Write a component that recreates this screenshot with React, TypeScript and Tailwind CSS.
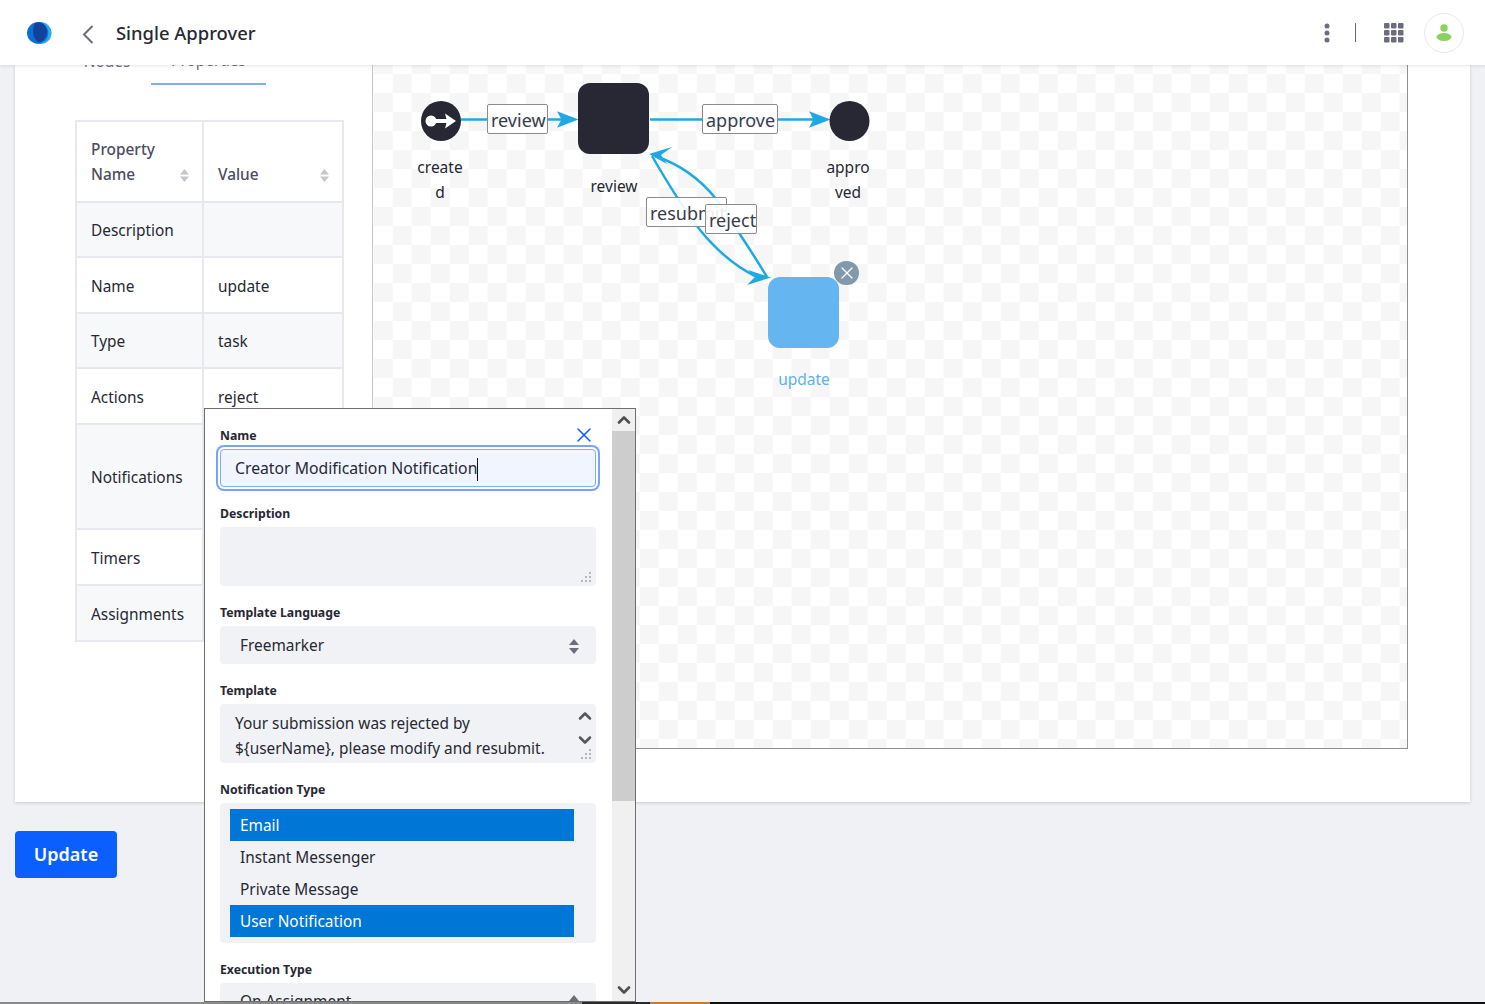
import { ChevronDown, ChevronUp, X } from "lucide-react";

const rows = [
  { name: "Description", value: "", h: "h-[55px]" },
  { name: "Name", value: "update", h: "h-[56px]" },
  { name: "Type", value: "task", h: "h-[55px]" },
  { name: "Actions", value: "reject", h: "h-[56px]" },
  { name: "Notifications", value: "", h: "h-[105px]" },
  { name: "Timers", value: "", h: "h-[56px]" },
  { name: "Assignments", value: "", h: "h-[56px]" },
];

const notificationTypes = [
  { label: "Email", selected: true },
  { label: "Instant Messenger", selected: false },
  { label: "Private Message", selected: false },
  { label: "User Notification", selected: true },
];

function SortIcon() {
  return (
    <svg width="9" height="13" viewBox="0 0 9 13" className="shrink-0 fill-[#c5c6cd]">
      <path d="M4.5 0 9 5.5H0z" />
      <path d="M4.5 13 0 7.5h9z" />
    </svg>
  );
}

function SelectArrows() {
  return (
    <svg width="10" height="15" viewBox="0 0 10 15" className="fill-[#6b6c7e]">
      <path d="M5 0l5 6H0z" />
      <path d="M5 15 0 9h10z" />
    </svg>
  );
}

function ResizeGrip() {
  return (
    <svg width="11" height="11" viewBox="0 0 11 11" className="absolute bottom-[3px] right-[4px] fill-[#b5b6c0]">
      <rect x="8" y="0" width="2" height="2" />
      <rect x="4" y="4" width="2" height="2" />
      <rect x="8" y="4" width="2" height="2" />
      <rect x="0" y="8" width="2" height="2" />
      <rect x="4" y="8" width="2" height="2" />
      <rect x="8" y="8" width="2" height="2" />
    </svg>
  );
}

function FieldLabel({ children }: { children: string }) {
  return <div className="mb-[5px] h-[18px] text-[12.25px] leading-[19px] font-bold text-[#272833]">{children}</div>;
}

function EdgeLabel({ text, className }: { text: string; className: string }) {
  return (
    <div
      className={`absolute h-[30px] overflow-hidden whitespace-nowrap rounded-[2px] border border-[#8b8b8b] bg-white/90 px-[3px] text-[18px] leading-[30px] text-[#3b3c48] ${className}`}
    >
      {text}
    </div>
  );
}

function Graph() {
  return (
    <>
      <svg width="1035" height="684" viewBox="373 65 1035 684" className="absolute left-0 top-0">
        <g fill="none" stroke="#1fa9e2" strokeWidth="2.5">
          <path d="M461 119.5H562" />
          <path d="M650 119.5H814" />
          <path d="M652 156C667 182 683 208 700 230C718 252 738 268 757 277" />
          <path d="M767 277C752 252 736 228 717 200C698 176 676 163 655 156" />
        </g>
        <g fill="#1fa9e2">
          <path d="M557 111.300 578.500 119.500 557 127.700 561.500 119.500z" />
          <path d="M809 111.300 830.500 119.500 809 127.700 813.500 119.500z" />
          <path d="M649 154 672 147 661 155 667 164z" />
          <path d="M771 277.500 748 270 755 277 747 285z" />
        </g>
        <circle cx="441" cy="121" r="20" fill="#272833" />
        <g fill="#fff">
          <circle cx="431" cy="121" r="5.500" />
          <rect x="431" y="119" width="18" height="4" />
          <path d="M445 113.500 456 121 445 128.500 447 121z" />
        </g>
        <rect x="578" y="83" width="71" height="71" rx="12" fill="#272833" />
        <circle cx="849.500" cy="121" r="20" fill="#272833" />
        <rect x="768" y="277" width="71" height="71" rx="12" fill="#64b5f0" />
      </svg>
      <EdgeLabel text="review" className="left-[114px] top-[39px] w-[61px]" />
      <EdgeLabel text="approve" className="left-[329px] top-[39px] w-[76px]" />
      <EdgeLabel text="resubmit" className="left-[273px] top-[132px] w-[81px]" />
      <EdgeLabel text="reject" className="left-[332px] top-[139px] w-[52px]" />
      <div className="absolute left-[461px] top-[196px] flex h-[24px] w-[25px] items-center justify-center rounded-full bg-[#8299ac]">
        <X className="h-[20px] w-[20px] text-white" strokeWidth={1.5} />
      </div>
      <div className="absolute left-[37px] top-[90px] w-[60px] text-center text-[15.5px] leading-[25px] text-[#272833]">
        create
        <br />d
      </div>
      <div className="absolute left-[211px] top-[109px] w-[60px] text-center text-[15.5px] leading-[25px] text-[#272833]">
        review
      </div>
      <div className="absolute left-[445px] top-[90px] w-[60px] text-center text-[15.5px] leading-[25px] text-[#272833]">
        appro
        <br />
        ved
      </div>
      <div className="absolute left-[401px] top-[302px] w-[60px] text-center text-[15.5px] leading-[25px] text-[#5fb2ee]">
        update
      </div>
    </>
  );
}

function NotificationPopup() {
  return (
    <div className="absolute left-[204px] top-[408px] z-20 flex h-[594px] w-[432px] border border-[#6e6e6e] bg-white">
      <div className="relative w-[407px] overflow-hidden pl-[15px] pr-[16px] pt-[17px]">
        <div className="flex flex-col gap-[17px]">
          <div className="relative">
            <FieldLabel>Name</FieldLabel>
            <X className="absolute right-0 top-[-3px] h-[24px] w-[24px] text-[#0b5fff]" strokeWidth={1.5} />
            <div className="flex h-[38px] items-center rounded-[4px] border border-[#80acff] bg-[#f0f5ff] pl-[14px] pt-[2px] text-[15.75px] text-[#272833] shadow-[0_0_0_2px_#fff,0_0_0_4px_#75a3ff]">
              <span>Creator Modification Notification</span>
              <span className="h-[23px] w-px bg-[#111]" />
            </div>
          </div>
          <div>
            <FieldLabel>Description</FieldLabel>
            <div className="relative h-[59px] rounded-[4px] bg-[#f1f2f5]">
              <ResizeGrip />
            </div>
          </div>
          <div>
            <FieldLabel>Template Language</FieldLabel>
            <div className="flex h-[38px] items-center justify-between rounded-[4px] bg-[#f1f2f5] pl-[20px] pr-[17px] pt-[2px] text-[15.4px] text-[#272833]">
              <span>Freemarker</span>
              <SelectArrows />
            </div>
          </div>
          <div>
            <FieldLabel>Template</FieldLabel>
            <div className="relative h-[59px] rounded-[4px] bg-[#f1f2f5] pl-[15px] pt-[7px] text-[15.4px] leading-[25px] text-[#272833]">
              <div className="whitespace-nowrap">Your submission was rejected by</div>
              <div className="whitespace-nowrap">{"${userName}, please modify and resubmit."}</div>
              <div className="absolute right-0 top-0 flex h-[48px] w-[23px] flex-col items-center justify-between py-[2px]">
                <ChevronUp className="h-[20px] w-[20px] text-[#555]" strokeWidth={3} />
                <ChevronDown className="h-[20px] w-[20px] text-[#555]" strokeWidth={3} />
              </div>
              <ResizeGrip />
            </div>
          </div>
          <div>
            <FieldLabel>Notification Type</FieldLabel>
            <div className="h-[140px] rounded-[4px] bg-[#f1f2f5] pl-[10px] pt-[6px]">
              {notificationTypes.map((t) => (
                <div
                  key={t.label}
                  className={`flex h-[32px] w-[344px] items-center pl-[10px] pt-[2px] text-[15.4px] ${
                    t.selected ? "bg-[#0076d7] text-white" : "text-[#272833]"
                  }`}
                >
                  {t.label}
                </div>
              ))}
            </div>
          </div>
          <div>
            <FieldLabel>Execution Type</FieldLabel>
            <div className="flex h-[38px] items-center justify-between rounded-[4px] bg-[#f1f2f5] pl-[20px] pr-[17px] text-[15.4px] text-[#272833]">
              <span>On Assignment</span>
              <SelectArrows />
            </div>
          </div>
        </div>
      </div>
      <div className="flex w-[23px] flex-col bg-[#f0f0f0]">
        <div className="flex h-[22px] items-center justify-center">
          <ChevronUp className="h-[20px] w-[20px] text-[#505050]" strokeWidth={3.25} />
        </div>
        <div className="h-[370px] bg-[#cdcdcd]" />
        <div className="flex-1" />
        <div className="flex h-[22px] items-center justify-center">
          <ChevronDown className="h-[20px] w-[20px] text-[#505050]" strokeWidth={3.25} />
        </div>
      </div>
    </div>
  );
}

export default function App() {
  return (
    <div className="relative h-[1004px] w-[1485px] overflow-hidden bg-[#f0f1f5] font-['Noto_Sans',sans-serif]">
      <header className="relative z-10 flex h-[65px] items-center bg-white pl-[27px] pr-[21px] shadow-[0_1px_3px_rgba(39,40,51,0.12)]">
        <svg width="25" height="24" viewBox="0 0 27 25" className="mr-[30px]">
          <circle cx="14.500" cy="12.500" r="12" fill="#29a9ee" />
          <circle cx="11.500" cy="12.500" r="11.500" fill="#0b6fd8" />
          <path d="M9 1.500C15 -.5 21 3 21.500 10 22 16 18 22 12.500 22.500 9 20 6.500 16 6.500 10.500 6.500 7 7.500 4 9 1.500z" fill="#12429a" />
        </svg>
        <svg width="12" height="19" viewBox="0 0 12 19" fill="none" className="mt-[3px] stroke-[#6b6c7e]" strokeWidth="2">
          <path d="M10.500 1 2 9.500l8.500 8.500" />
        </svg>
        <h1 className="ml-[22px] text-[18.4px] font-medium text-[#272833]">Single Approver</h1>
        <div className="ml-auto flex items-center">
          <svg width="6" height="20" viewBox="0 0 6 20" className="fill-[#6b6c7e]">
            <circle cx="3" cy="3" r="2.500" />
            <circle cx="3" cy="10" r="2.500" />
            <circle cx="3" cy="17" r="2.500" />
          </svg>
          <div className="ml-[25px] h-[19px] w-px bg-[#6b6c7e]" />
          <svg width="20" height="20" viewBox="0 0 20 20" className="ml-[28px] fill-[#6b6c7e]">
            {[0, 7, 14].map((y) =>
              [0, 7, 14].map((x) => <rect key={`${x}-${y}`} x={x} y={y} width="5.500" height="5.500" rx="1" />),
            )}
          </svg>
          <div className="ml-[20px] flex h-[40px] w-[40px] items-center justify-center rounded-full border border-[#e7e7ed] bg-white">
            <svg width="16" height="17" viewBox="0 0 16 17" className="fill-[#89d35d]">
              <circle cx="8" cy="4" r="3.700" />
              <ellipse cx="8" cy="13" rx="7.500" ry="4" />
            </svg>
          </div>
        </div>
      </header>

      <main className="px-[15px]">
        <section className="flex h-[737px] w-[1455px] bg-white shadow-[0_1px_3px_rgba(39,40,51,0.2)]">
          <div className="w-[358px] shrink-0 border-r border-[#c9c9c9]">
            <div className="-mt-[20px] ml-[60px] flex h-[40px] items-end text-[15.4px] text-[#6b6c7e]">
              <div className="flex h-[40px] w-[76px] items-center justify-center pb-[6px] pr-[12px]">Nodes</div>
              <div className="flex h-[40px] w-[115px] items-center justify-center border-b-2 border-[#80acff] pb-[6px]">Properties</div>
            </div>
            <table className="ml-[60px] mt-[35px] w-[269px] table-fixed border-collapse text-[15.4px] text-[#272833]">
              <thead>
                <tr className="h-[81px] text-[#4c4d5c]">
                  <th className="w-[127px] border-2 border-[#e7e7ed] px-[14px] pb-[14px] text-left align-bottom font-medium leading-[25px]">
                    <div className="flex items-end justify-between">
                      <span>
                        Property
                        <br />
                        Name
                      </span>
                      <span className="-mr-[1px] mb-[5px]">
                        <SortIcon />
                      </span>
                    </div>
                  </th>
                  <th className="border-2 border-[#e7e7ed] px-[14px] pb-[14px] text-left align-bottom font-medium leading-[25px]">
                    <div className="flex items-end justify-between">
                      <span>Value</span>
                      <span className="-mr-[1px] mb-[5px]">
                        <SortIcon />
                      </span>
                    </div>
                  </th>
                </tr>
              </thead>
              <tbody>
                {rows.map((row, i) => (
                  <tr key={row.name} className={`${row.h} ${i % 2 === 0 ? "bg-[#f7f8f9]" : "bg-white"}`}>
                    <td className="border-2 border-[#e7e7ed] px-[14px] pt-[3px]">{row.name}</td>
                    <td className="border-2 border-[#e7e7ed] px-[14px] pt-[3px]">{row.value}</td>
                  </tr>
                ))}
              </tbody>
            </table>
          </div>
          <div className="relative h-[684px] w-[1035px] border-b border-r border-[#8f8f8f] bg-[conic-gradient(#f6f6f6_25%,#ffffff_0_50%,#f6f6f6_0_75%,#ffffff_0)] bg-[length:38px_38px] bg-[position:0.67px_9px]">
            <Graph />
          </div>
        </section>
        <button className="mt-[29px] flex h-[47px] w-[102px] items-center justify-center rounded-[4px] bg-[#0b5fff] text-[18px] font-semibold text-white">
          Update
        </button>
      </main>

      <NotificationPopup />

      <div className="absolute bottom-0 left-0 z-30 flex h-[2px] w-full">
        <div className="w-[582px] bg-[#8a8a8a]" />
        <div className="w-[68px] bg-[#2a2a2a]" />
        <div className="w-[60px] bg-[#c67a35]" />
        <div className="flex-1 bg-[#101010]" />
      </div>
    </div>
  );
}
